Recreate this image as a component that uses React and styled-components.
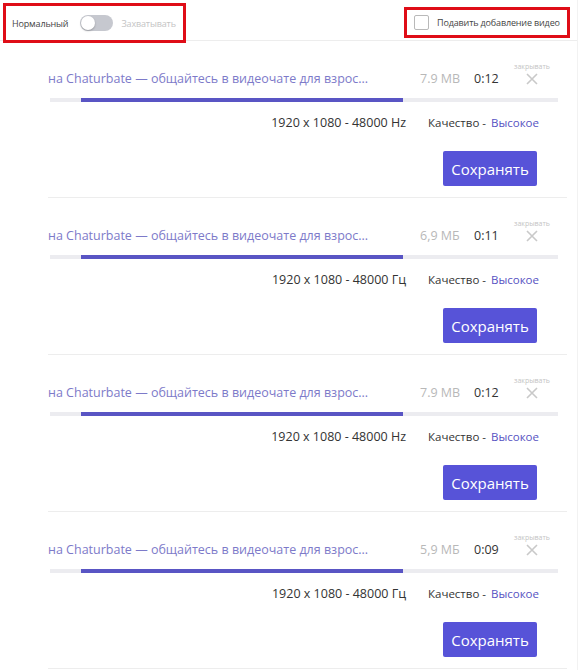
import styled, { createGlobalStyle } from "styled-components";

const GlobalStyle = createGlobalStyle`
  html, body {
    margin: 0;
    padding: 0;
    background: #fff;
  }
  body {
    font-family: "Open Sans", "Noto Sans", sans-serif;
    color: #333;
  }
`;

const videos = [
  { id: 1, size: "7.9 MB", time: "0:12", hz: "Hz" },
  { id: 2, size: "6,9 МБ", time: "0:11", hz: "Гц" },
  { id: 3, size: "7.9 MB", time: "0:12", hz: "Hz" },
  { id: 4, size: "5,9 МБ", time: "0:09", hz: "Гц" },
];

export default () => {
  return (
    <>
      <GlobalStyle />
      <Page>
        <Header>
          <ModeBox>
            <ModeLabel>Нормальный</ModeLabel>
            <Toggle>
              <Knob />
            </Toggle>
            <ModeLabel muted>Захватывать</ModeLabel>
          </ModeBox>
          <SuppressBox>
            <Check />
            <ModeLabel>Подавить добавление видео</ModeLabel>
          </SuppressBox>
        </Header>
        {videos.map((item) => (
          <Card key={item.id}>
            <TitleRow>
              <Title>на Chaturbate — общайтесь в видеочате для взрос...</Title>
              <Size>{item.size}</Size>
              <Time>{item.time}</Time>
              <Close>
                <CloseLabel>закрывать</CloseLabel>
                <svg width="12" height="12" viewBox="0 0 12 12">
                  <path
                    d="M1 1 L11 11 M11 1 L1 11"
                    stroke="#c9c9c9"
                    strokeWidth="1.6"
                  />
                </svg>
              </Close>
            </TitleRow>
            <Track>
              <Segment style={{ width: 31 }} />
              <Segment filled style={{ width: 322 }} />
              <Segment style={{ flex: 1 }} />
            </Track>
            <InfoRow>
              <span>1920 x 1080 - 48000 {item.hz}</span>
              <Quality>
                Качество - <QualityValue>Высокое</QualityValue>
              </Quality>
            </InfoRow>
            <ButtonRow>
              <SaveButton>Сохранять</SaveButton>
            </ButtonRow>
          </Card>
        ))}
      </Page>
    </>
  );
};

const Page = styled.div`
  width: 577px;
  border-right: 1px solid #f2f2f2;
  min-height: 670px;
`;

const Header = styled.div`
  height: 40px;
  border-bottom: 1px solid #ededed;
  display: flex;
  justify-content: space-between;
  align-items: flex-start;
`;

const ModeBox = styled.div`
  margin: 3px 0 0 3px;
  width: 183px;
  height: 40px;
  box-sizing: border-box;
  border: 3px solid #df0d17;
  display: flex;
  align-items: center;
  padding-left: 6px;
  gap: 12px;
`;

const SuppressBox = styled.div`
  margin: 7px 7px 0 0;
  width: 166px;
  height: 31px;
  box-sizing: border-box;
  border: 3px solid #df0d17;
  display: flex;
  align-items: center;
  padding-left: 7px;
  gap: 8px;
`;

const ModeLabel = styled.span`
  font-size: 9px;
  letter-spacing: -0.15px;
  white-space: nowrap;
  color: ${(p) => (p.muted ? "#c4c4c4" : "#444")};
  margin-left: ${(p) => (p.muted ? "-4px" : "0")};
`;

const Toggle = styled.div`
  width: 33px;
  height: 16px;
  border-radius: 8px;
  background: #c6c8cf;
  display: flex;
  align-items: center;
  padding: 0 1px;
  box-sizing: border-box;
`;

const Knob = styled.div`
  width: 14px;
  height: 14px;
  border-radius: 50%;
  background: #fff;
  box-shadow: 0 1px 2px rgba(0, 0, 0, 0.25);
`;

const Check = styled.div`
  width: 15px;
  height: 15px;
  box-sizing: border-box;
  border: 1px solid #b9b9b9;
  border-radius: 2px;
  background: #fff;
`;

const Card = styled.div`
  margin-left: 48px;
  width: 519px;
  padding: 28px 0 11px;
  border-bottom: 1px solid #ededed;
`;

const TitleRow = styled.div`
  display: flex;
  align-items: center;
  height: 18px;
`;

const Title = styled.div`
  font-size: 12.5px;
  color: #7d7ac9;
  white-space: nowrap;
  width: 372px;
`;

const Size = styled.div`
  font-size: 12.5px;
  color: #b8b8b8;
  width: 54px;
`;

const Time = styled.div`
  font-size: 12.5px;
  color: #333;
  width: 40px;
`;

const Close = styled.div`
  display: flex;
  flex-direction: column;
  align-items: center;
  margin-top: -8px;
  gap: 2px;
`;

const CloseLabel = styled.div`
  font-size: 7px;
  color: #c4c4c4;
  line-height: 8px;
`;

const Track = styled.div`
  display: flex;
  margin: 11px 9px 0 2px;
  height: 4px;
`;

const Segment = styled.div`
  height: 4px;
  background: ${(p) => (p.filled ? "#5955c4" : "#ececf0")};
`;

const InfoRow = styled.div`
  display: flex;
  justify-content: flex-end;
  align-items: center;
  gap: 22px;
  height: 18px;
  margin-top: 11px;
  padding-right: 28px;
  font-size: 12.5px;
  color: #333;
`;

const Quality = styled.span`
  font-size: 11.5px;
  color: #333;
`;

const QualityValue = styled.span`
  margin-left: 2px;
  color: #5652c2;
`;

const ButtonRow = styled.div`
  display: flex;
  justify-content: flex-end;
  margin-top: 20px;
  padding-right: 30px;
`;

const SaveButton = styled.button`
  width: 94px;
  height: 35px;
  border: none;
  border-radius: 2px;
  background: #5753d8;
  color: #fff;
  font-family: "Open Sans", "Noto Sans", sans-serif;
  font-size: 15px;
  padding: 0;
  cursor: pointer;
`;
